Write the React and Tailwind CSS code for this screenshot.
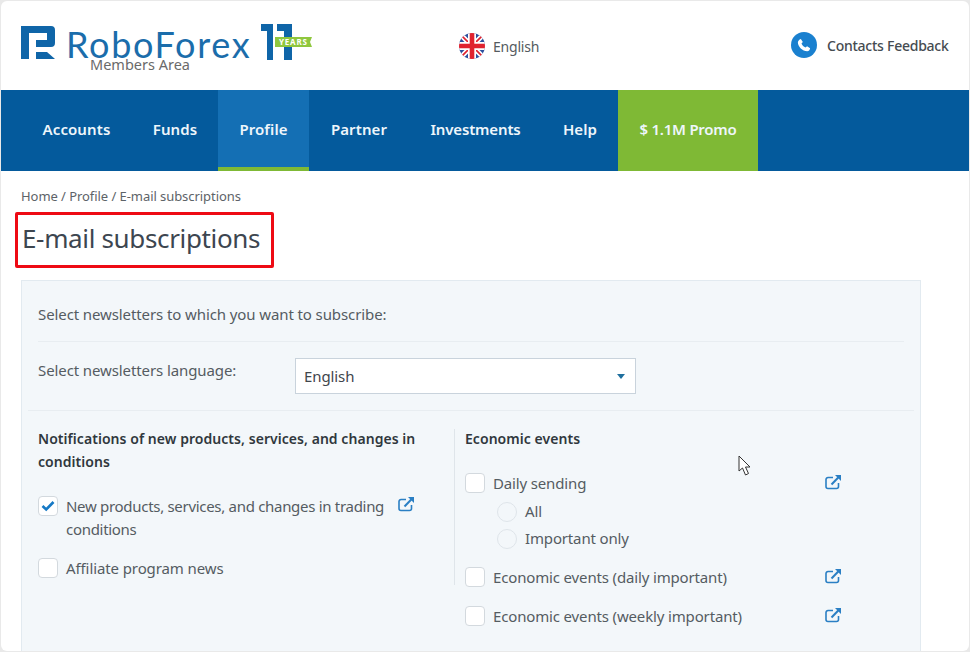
import React from "react";

const F = { fontFamily: '"Noto Sans", "Open Sans", sans-serif' };

function Ext({ className = "" }) {
  return (
    <svg width="17" height="16" viewBox="0 0 17 16" fill="none" className={className}>
      <path d="M13.500 9v3.500a2 2 0 0 1-2 2H3a2 2 0 0 1-2-2V5.500a2 2 0 0 1 2-2h5" stroke="#2a7fc4" strokeWidth="1.600" />
      <path d="M6.500 10.500 13.500 3.200" stroke="#2a7fc4" strokeWidth="2" />
      <path d="M10 1h6v6z" fill="#2a7fc4" />
    </svg>
  );
}

function Box({ checked }) {
  return (
    <span className="w-5 h-5 shrink-0 rounded-[4px] border border-[#d3d9de] bg-white flex items-center justify-center">
      {checked && (
        <svg width="14" height="12" viewBox="0 0 14 12" fill="none">
          <path d="M1.500 6 5.200 9.500 12.500 2" stroke="#1679c5" strokeWidth="2.600" />
        </svg>
      )}
    </span>
  );
}

function Radio({ label }) {
  return (
    <div className="flex items-center h-[27px] pl-[32px] gap-[8px]">
      <span className="w-5 h-5 rounded-full border border-[#dfe5ea] bg-[#f3f7fa]" />
      <span>{label}</span>
    </div>
  );
}

function Row({ label, className = "" }) {
  return (
    <div className={`flex items-center ${className}`}>
      <Box />
      <span className="ml-2">{label}</span>
      <Ext className="absolute left-[360px] -translate-y-px" />
    </div>
  );
}

function Flag() {
  return (
    <svg width="26" height="26" viewBox="0 0 26 26">
      <defs>
        <clipPath id="flagc"><circle cx="13" cy="13" r="13" /></clipPath>
      </defs>
      <g clipPath="url(#flagc)">
        <rect width="26" height="26" fill="#2c4f9e" />
        <path d="M0 0 26 26M26 0 0 26" stroke="#fff" strokeWidth="5" />
        <path d="M0 0 26 26M26 0 0 26" stroke="#e0232f" strokeWidth="1.600" />
        <path d="M13 0v26M0 13h26" stroke="#fff" strokeWidth="8" />
        <path d="M13 0v26M0 13h26" stroke="#e0232f" strokeWidth="4.600" />
      </g>
    </svg>
  );
}

function Logo() {
  return (
    <div className="flex items-start">
      <svg width="35" height="34" viewBox="0 0 35 34" className="mt-[25px] ml-[20px] shrink-0">
        <path d="M0 0H30Q34 0 34 4V17Q34 21 30 21H15V14H26V7H8V33H0Z" fill="#0f65a8" />
        <path d="M15 26H26L34 33H15Z" fill="#0f65a8" />
      </svg>
      <div className="relative w-[189px] ml-[10px] mt-[28px]">
        <div className="text-[36px] leading-[30px] tracking-[1.7px] text-[#1b6dab]" style={{ fontFamily: '"Lato", sans-serif' }}>RoboForex</div>
        <div className="absolute left-[24px] top-[30px] text-[14.500px] leading-[10px] text-[#6a6a6a]" style={F}>Members Area</div>
      </div>
      <div className="relative ml-[6px] mt-[23px] w-[52px] h-[36px]">
        <svg width="52" height="36" viewBox="0 0 52 36" className="absolute left-0 top-0">
          <path d="M0 0H12V36H6V7H0Z" fill="#0f65a8" />
          <path d="M16 0H31V36H23V7H16Z" fill="#0f65a8" />
          <path d="M14 13H51L49 18 51 23H14Z" fill="#8fc73e" />
        </svg>
        <span className="absolute left-[18px] top-[14px] text-[8px] leading-[8px] font-bold tracking-[0.8px] text-white" style={F}>YEARS</span>
      </div>
    </div>
  );
}

const nav = [
  { label: "Accounts", cls: "w-[111px]" },
  { label: "Funds", cls: "w-[86px]" },
  { label: "Profile", cls: "w-[91px] bg-[#146fb4] border-b-[4px] border-[#7fb935] pt-[3px]" },
  { label: "Partner", cls: "w-[100px]" },
  { label: "Investments", cls: "w-[133px] tracking-[-0.15px]" },
  { label: "Help", cls: "w-[76px]" },
];

export default function App() {
  return (
    <div className="h-[652px] w-[970px] overflow-hidden bg-[#e9e9e9] pt-px pl-px pr-px pb-px" style={F}>
      <div className="h-[650px] overflow-hidden rounded-[6px] bg-white relative">
        <header className="h-[88px] flex items-start relative">
          <div className="w-[447px]"><Logo /></div>
          <div className="w-[330px] flex items-center mt-[32px] pl-[11px] gap-[8px] text-[14px] tracking-[-0.2px] text-[#555b60]">
            <Flag />
            <span>English</span>
          </div>
          <div className="flex items-center mt-[31px] pl-[13px] gap-[10px] text-[14px] font-medium tracking-[-0.25px] text-[#454b51] whitespace-nowrap">
            <span className="w-[26px] h-[26px] rounded-full bg-[#1a80cf] flex items-center justify-center">
              <svg width="14" height="14" viewBox="0 0 24 24" fill="#fff">
                <path d="M6.600 1.500 10 6.700 7.700 9.500c1.200 3 3.800 5.600 6.800 6.800l2.800-2.300 5.200 3.400c-.5 3-2.500 5.100-5 5.100C9.500 22.500 1.500 14.500 1.500 7.500c0-2.500 2.100-5 5.100-6Z" />
              </svg>
            </span>
            <span>Contacts Feedback</span>
          </div>
        </header>
        <nav className="mt-px h-[81px] bg-[#045a9c] flex pl-[20px] pb-0 text-[15px] font-semibold tracking-[0.1px] text-[#eef6fb]">
          {nav.map((n) => (
            <div key={n.label} className={`h-full flex items-center justify-center pb-[2px] ${n.cls}`}>{n.label}</div>
          ))}
          <div className="h-full w-[140px] justify-center bg-[#7fb935] flex items-center pb-[2px] tracking-[-0.25px]">$ 1.1M Promo</div>
        </nav>
        <div className="pl-[20px] pt-[16px]">
          <div className="text-[13px] leading-[18px] tracking-[-0.06px] text-[#5d6368]">Home / Profile / E-mail subscriptions</div>
          <div className="mt-[7px] -ml-[6px] w-[259px] h-[56px] rounded-[2px] border-[3px] border-[#ee0a14] flex items-center pl-[4px] pb-[5px]">
            <h1 className="text-[26px] leading-[34px] tracking-[-0.35px] text-[#3d4650] whitespace-nowrap">E-mail subscriptions</h1>
          </div>
          <section className="mt-[12px] w-[900px] h-[400px] bg-[#f3f7fa] border border-[#e2eaf0] text-[15px] tracking-[-0.1px] text-[#555c62]">
            <div className="mx-[16px] h-[61px] pt-[7px] flex items-center border-b border-[#e8edf1]">Select newsletters to which you want to subscribe:</div>
            <div className="mx-[6px] h-[69px] border-b border-[#e8edf1] flex items-start">
              <div className="w-[267px] pl-[10px] pt-[17px] leading-[22px]">Select newsletters language:</div>
              <div className="mt-[16px] w-[341px] h-[36px] bg-white border border-[#c9d3dc] flex items-center justify-between px-[8px] text-[#3f464c]">
                <span>English</span>
                <svg width="8" height="5" viewBox="0 0 8 5" className="mr-[2px]"><path d="M0 0H8L4 5Z" fill="#1f6f9e" /></svg>
              </div>
            </div>
            <div className="flex pt-[18px]">
              <div className="w-[433px] h-[156px] pl-[16px] pr-[16px] border-r border-[#dfe5ea] relative">
                <div className="-mt-[2px] font-semibold text-[#30373d] text-[14px] tracking-[0.05px] leading-[23px]">Notifications of new products, services, and changes in conditions</div>
                <div className="flex items-start mt-[22px]">
                  <span className="mt-[1px]"><Box checked /></span>
                  <span className="ml-2 leading-[23px] w-[335px] tracking-[-0.3px]">New products, services, and changes in trading conditions</span>
                  <Ext className="absolute left-[376px] top-[67px]" />
                </div>
                <div className="flex items-center mt-[16px]">
                  <Box />
                  <span className="ml-2">Affiliate program news</span>
                </div>
              </div>
              <div className="flex-1 pl-[10px] -mt-[2px] tracking-[-0.15px]">
                <div className="font-semibold text-[#30373d] text-[14px] tracking-[0.05px] leading-[23px]">Economic events</div>
                <div className="relative mt-[21px] flex flex-col">
                  <Row label="Daily sending" className="h-[24px]" />
                  <div className="mt-[3px]">
                    <Radio label="All" />
                    <Radio label="Important only" />
                  </div>
                  <Row label="Economic events (daily important)" className="h-[24px] mt-[13px]" />
                  <Row label="Economic events (weekly important)" className="h-[24px] mt-[15px]" />
                </div>
              </div>
            </div>
          </section>
        </div>
        <svg width="15" height="22" viewBox="0 0 15 22" className="absolute left-[737px] top-[454px]">
          <path d="M1 1V16L4.500 13 7.500 20 10.500 18.500 7.500 12H12Z" fill="#fff" stroke="#333" strokeWidth="1" />
        </svg>
      </div>
    </div>
  );
}
